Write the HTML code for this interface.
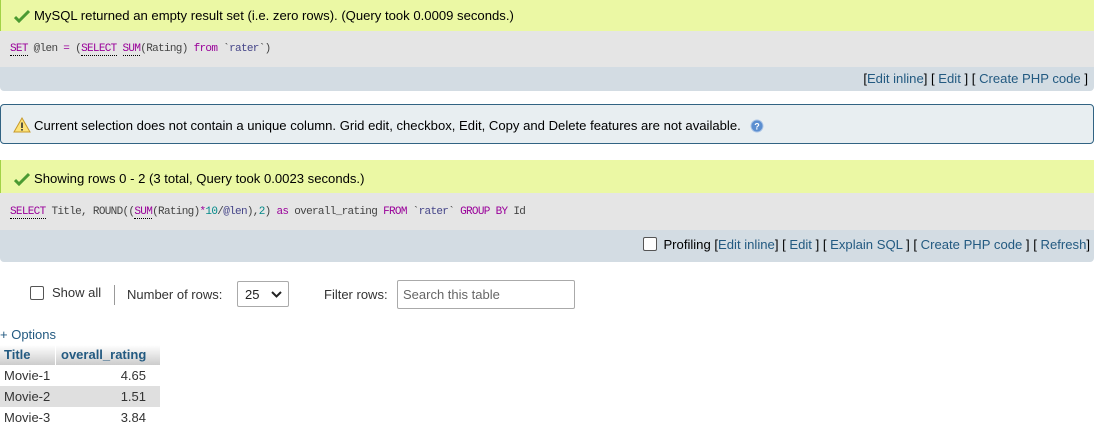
<!DOCTYPE html>
<html><head><style>
body{margin:0;width:1098px;height:434px;overflow:hidden;background:#fff;font-family:"Liberation Sans",Arial,sans-serif;font-size:13px;color:#000;position:relative}
.abs{position:absolute}
.ok{left:0;width:1094px;background:#ebf8a4;border-left:1px solid #a2d246;box-sizing:border-box;padding-left:33px;font-size:13.1px;color:#000}
.sql{left:0;width:1094px;background:#e5e5e5;font-family:"Liberation Mono","DejaVu Sans Mono",monospace;font-size:11px;letter-spacing:-0.68px;padding-left:10px;box-sizing:border-box;color:#444}
.tb{left:0;width:1094px;background:#d3dce3;border-radius:0 0 4px 4px;text-align:right;box-sizing:border-box;padding-right:6px;font-size:13.1px}
a{color:#235a81;text-decoration:none}
.k{color:#909;border-bottom:1px dotted #000}
.kk{color:#909}
.n{color:#088}
</style></head><body>
<div class="abs ok" style="top:0;height:31px;line-height:32px">MySQL returned an empty result set (i.e. zero rows). (Query took 0.0009 seconds.)</div>
<svg class="abs" style="left:14px;top:9px" width="16" height="14" viewBox="0 0 16 14"><path d="M1 8 L5 12 L15 2" stroke="#4b9a32" stroke-width="3" fill="none"/></svg>
<div class="abs sql" style="top:31px;height:36px;line-height:36px"><span class="k">SET</span> @len <span class="kk">=</span> (<span class="k">SELECT</span> <span class="k">SUM</span>(Rating) <span class="kk">from</span> `<span style="color:#448">rater</span>`)</div>
<div class="abs tb" style="top:67px;height:24px;line-height:24px">[<a>Edit inline</a>] [ <a>Edit</a> ] [ <a>Create PHP code</a> ]</div>

<div class="abs" style="left:0;top:104px;width:1094px;height:40px;box-sizing:border-box;background:#e8eef1;border:1px solid #316383;border-radius:4px;padding-left:33px;line-height:41px;font-size:13.1px">Current selection does not contain a unique column. Grid edit, checkbox, Edit, Copy and Delete features are not available.</div>
<svg class="abs" style="left:13px;top:117px" width="18" height="16" viewBox="0 0 18 16"><path d="M9 1 L17 15 L1 15 Z" fill="#fde37a" stroke="#c89a2a"/><rect x="8.2" y="5.5" width="1.6" height="5.5" fill="#333"/><rect x="8.2" y="12" width="1.6" height="1.6" fill="#333"/></svg>
<svg class="abs" style="left:750px;top:119px" width="14" height="14" viewBox="0 0 14 14"><circle cx="7" cy="7" r="6" fill="#5b8ed0" stroke="#a9c3e6"/><text x="7" y="10.5" font-size="9" font-weight="bold" text-anchor="middle" fill="#fff" font-family="Liberation Sans">?</text></svg>

<div class="abs ok" style="top:160px;height:33px;line-height:38px">Showing rows 0 - 2 (3 total, Query took 0.0023 seconds.)</div>
<svg class="abs" style="left:14px;top:172px" width="16" height="14" viewBox="0 0 16 14"><path d="M1 8 L5 12 L15 2" stroke="#4b9a32" stroke-width="3" fill="none"/></svg>
<div class="abs sql" style="top:193px;height:37px;line-height:38px"><span class="k">SELECT</span> Title, ROUND((<span class="k">SUM</span>(Rating)<span class="kk">*</span><span class="n">10</span>/<span style="color:#448">@len</span>),<span class="n">2</span>) <span class="kk">as</span> overall_rating <span class="kk">FROM</span> `<span style="color:#448">rater</span>` <span class="kk">GROUP BY</span> Id</div>
<div class="abs tb" style="top:230px;height:32px;line-height:29px;padding-right:4px"><span style="display:inline-block;width:12px;height:12px;border:1px solid #555;border-radius:2px;background:#fff;vertical-align:-2px;margin-right:6px"></span>Profiling [<a>Edit inline</a>] [ <a>Edit</a> ] [ <a>Explain SQL</a> ] [ <a>Create PHP code</a> ] [ <a>Refresh</a>]</div>

<span class="abs" style="left:30px;top:286px;width:12px;height:12px;border:1px solid #555;border-radius:2px"></span>
<div class="abs" style="left:52px;top:285px;color:#333">Show all</div>
<div class="abs" style="left:114px;top:285px;width:1px;height:20px;background:#999"></div>
<div class="abs" style="left:127px;top:287px;color:#333">Number of rows:</div>
<div class="abs" style="left:237px;top:281px;width:52px;height:26px;border:1px solid #aaa;border-radius:2px;box-sizing:border-box;padding-left:7px;line-height:25px;color:#222">25<svg style="position:absolute;right:6px;top:9px" width="11" height="7" viewBox="0 0 11 7"><path d="M1 1 L5.5 5.5 L10 1" stroke="#222" stroke-width="2" fill="none"/></svg></div>
<div class="abs" style="left:324px;top:287px;color:#333">Filter rows:</div>
<div class="abs" style="left:397px;top:280px;width:178px;height:29px;border:1px solid #aaa;border-radius:2px;box-sizing:border-box;padding-left:5px;line-height:27px;color:#666">Search this table</div>

<div class="abs" style="left:0;top:327px;color:#235a81">+ Options</div>
<div class="abs" style="left:0;top:345px;width:160px;height:20px;background:linear-gradient(#fff,#ccc)"></div>
<div class="abs" style="left:55px;top:345px;width:1px;height:20px;background:#fff"></div>
<div class="abs" style="left:4px;top:347px;font-weight:bold;color:#235a81;font-size:13px">Title</div>
<div class="abs" style="left:61px;top:347px;font-weight:bold;color:#235a81;font-size:13px">overall_rating</div>
<div class="abs" style="left:0;top:386px;width:160px;height:21px;background:#dfdfdf"></div>
<div class="abs" style="left:4px;top:366px;line-height:20px;color:#333">Movie-1<br><span style="line-height:22px">Movie-2</span><br>Movie-3</div>
<div class="abs" style="left:100px;top:366px;width:46px;text-align:right;line-height:20px;color:#333">4.65<br><span style="line-height:22px">1.51</span><br>3.84</div>
</body></html>
